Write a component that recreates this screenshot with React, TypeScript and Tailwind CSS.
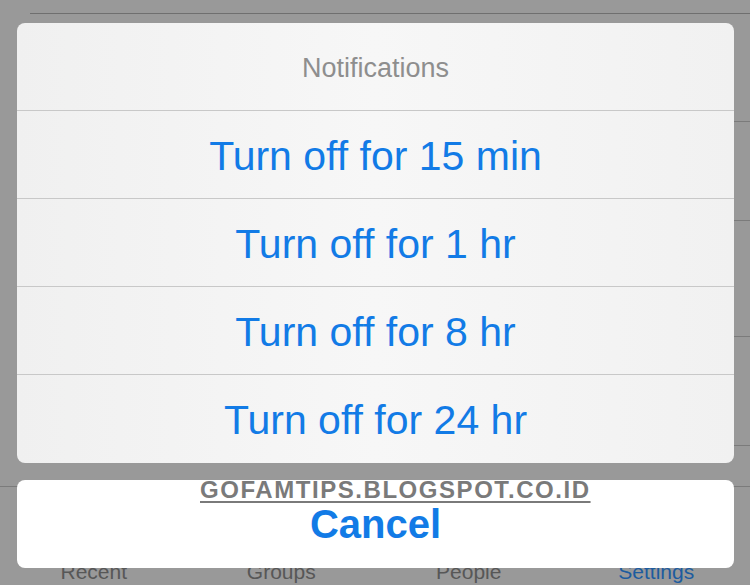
import React from 'react';

const options = [
  'Turn off for 15 min',
  'Turn off for 1 hr',
  'Turn off for 8 hr',
  'Turn off for 24 hr',
];

const tabs = [
  { label: 'Recent', active: false },
  { label: 'Groups', active: false },
  { label: 'People', active: false },
  { label: 'Settings', active: true },
];

const font = { fontFamily: '"Liberation Sans", Arial, sans-serif' };

export default function App() {
  return (
    <div
      className="relative w-[750px] h-[585px] overflow-hidden bg-[#999999]"
      style={font}
    >
      {/* dimmed screen behind the sheet */}
      <div className="flex flex-col">
        <div className="h-[13px]"></div>
        <div className="ml-[30px] h-px bg-[#6f6f6f]"></div>
        <div className="h-[107px]"></div>
        <div className="ml-[30px] h-px bg-[#7b7b7b]"></div>
        <div className="h-[98px]"></div>
        <div className="ml-[30px] h-px bg-[#7b7b7b]"></div>
        <div className="h-[115px]"></div>
        <div className="ml-[30px] h-px bg-[#7b7b7b]"></div>
        <div className="h-[108px]"></div>
        <div className="ml-[30px] h-px bg-[#7b7b7b]"></div>
        <div className="h-[40px]"></div>
        <div className="h-px bg-[#7b7b7b]"></div>
        <div className="grid grid-cols-4 h-[98px] pt-[73px]">
          {tabs.map((tab) => (
            <div
              key={tab.label}
              className={`text-center text-[21px] leading-[24px] ${
                tab.active ? 'text-[#1d5c9f]' : 'text-[#575757]'
              }`}
            >
              {tab.label}
            </div>
          ))}
        </div>
      </div>

      {/* action sheet */}
      <div className="absolute top-[23px] left-[17px] w-[717px] flex flex-col gap-[17px]">
        <div className="rounded-[8px] overflow-hidden bg-gradient-to-r from-[#f0f0f0] via-[#f7f7f7] to-[#f1f1f1]">
          <div className="h-[88px] pt-[4px] flex items-center justify-center border-b border-[#c8c8c8] text-[27px] text-[#8e8e8e]">
            Notifications
          </div>
          {options.map((opt, i) => (
            <div
              key={opt}
              className={`h-[88px] pt-[4px] flex items-center justify-center text-[41px] text-[#127be6] ${
                i < options.length - 1 ? 'border-b border-[#c8c8c8]' : ''
              }`}
            >
              {opt}
            </div>
          ))}
        </div>
        <div className="relative h-[88px] rounded-[8px] bg-white flex items-center justify-center">
          <span className="text-[40px] font-bold text-[#127be6]">Cancel</span>
          <span className="absolute top-[-2px] left-[183px] text-[24px] leading-[24px] font-bold tracking-[1.55px] text-[#7a7a7a] underline decoration-[2px] underline-offset-[3px]">
            GOFAMTIPS.BLOGSPOT.CO.ID
          </span>
        </div>
      </div>
    </div>
  );
}
